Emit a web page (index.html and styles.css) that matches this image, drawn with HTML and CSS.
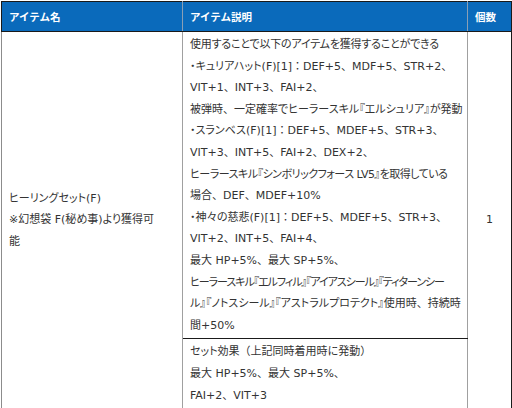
FILE: index.html
```html
<!DOCTYPE html>
<html lang="ja">
<head>
<meta charset="utf-8">
<link rel="stylesheet" href="styles.css">
</head>
<body>
<table class="items">
  <colgroup>
    <col class="c-name">
    <col class="c-desc">
    <col class="c-qty">
  </colgroup>
  <thead>
    <tr>
      <th class="col-name">アイテム名</th>
      <th class="col-desc">アイテム説明</th>
      <th class="col-qty">個数</th>
    </tr>
  </thead>
  <tbody>
    <tr>
      <td class="name" rowspan="2">
        <span class="ln">ヒーリングセット(F)</span>
        <span class="ln">※幻想袋 F(秘め事)より獲得可</span>
        <span class="ln">能</span>
      </td>
      <td class="desc">
        <span class="ln snug">使用することで以下のアイテムを獲得することができる</span>
        <span class="ln">・キュリアハット(F)[1]<span class="fw">：</span>DEF+5<span class="fw">、</span>MDF+5<span class="fw">、</span>STR+2<span class="fw">、</span></span>
        <span class="ln">VIT+1<span class="fw">、</span>INT+3<span class="fw">、</span>FAI+2<span class="fw">、</span></span>
        <span class="ln">被弾時<span class="fw">、</span>一定確率でヒーラースキル『エルシュリア』が発動</span>
        <span class="ln">・スランベス(F)[1]<span class="fw">：</span>DEF+5<span class="fw">、</span>MDEF+5<span class="fw">、</span>STR+3<span class="fw">、</span></span>
        <span class="ln">VIT+3<span class="fw">、</span>INT+5<span class="fw">、</span>FAI+2<span class="fw">、</span>DEX+2<span class="fw">、</span></span>
        <span class="ln tight">ヒーラースキル『シンボリックフォース LV5』を取得している</span>
        <span class="ln">場合<span class="fw">、</span>DEF<span class="fw">、</span>MDEF+10%</span>
        <span class="ln">・神々の慈悲(F)[1]<span class="fw">：</span>DEF+5<span class="fw">、</span>MDEF+5<span class="fw">、</span>STR+3<span class="fw">、</span></span>
        <span class="ln">VIT+2<span class="fw">、</span>INT+5<span class="fw">、</span>FAI+4<span class="fw">、</span></span>
        <span class="ln">最大 HP+5%<span class="fw">、</span>最大 SP+5%<span class="fw">、</span></span>
        <span class="ln tighter">ヒーラースキル『エルフィル』『アイアスシール』『ティターンシー</span>
        <span class="ln">ル』『ノトスシール』『アストラルプロテクト』使用時<span class="fw">、</span>持続時</span>
        <span class="ln">間+50%</span>
      </td>
      <td class="qty" rowspan="2">1</td>
    </tr>
    <tr>
      <td class="desc set">
        <span class="ln">セット効果<span class="fw">（</span>上記同時着用時に発動<span class="fw">）</span></span>
        <span class="ln">最大 HP+5%<span class="fw">、</span>最大 SP+5%<span class="fw">、</span></span>
        <span class="ln">FAI+2<span class="fw">、</span>VIT+3</span>
      </td>
    </tr>
  </tbody>
</table>
</body>
</html>
```

FILE: styles.css
```css
html, body {
  margin: 0;
  padding: 0;
  background: #ffffff;
}
body {
  padding: 1px 0 0 1px;
  font-family: "DejaVu Sans", "Noto Sans CJK JP", sans-serif;
  font-size: 11px;
  font-feature-settings: "palt";
  color: #333333;
}
.items {
  border-collapse: collapse;
  width: 510px;
  table-layout: fixed;
}
.c-name { width: 181px; }
.c-desc { width: 285px; }
.c-qty { width: 44px; }
.items th {
  background: #0a6abb;
  color: #ffffff;
  font-family: "Noto Sans CJK JP", sans-serif;
  font-feature-settings: normal;
  font-size: 10.5px;
  font-weight: bold;
  text-align: left;
  height: 29px;
  padding: 0 7px;
  border-top: 1px solid #1a1a1a;
  border-bottom: 1px solid #1a1a1a;
  border-left: 1px solid #8a9fb5;
  border-right: 1px solid #8a9fb5;
  line-height: 14px;
}
.items th.col-name { border-left-color: #1a1a1a; }
.items th.col-qty { border-right-color: #1a1a1a; }
.items td {
  border-left: 1px solid #a0a0a0;
  border-right: 1px solid #a0a0a0;
  border-bottom: 1px solid #1a1a1a;
  padding: 2px 7px;
  line-height: 21.6px;
  vertical-align: top;
}
.items td.name {
  vertical-align: middle;
  border-left-color: #8c8c8c;
}
.items td.qty {
  vertical-align: middle;
  text-align: center;
  border-right-color: #1a1a1a;
}
.ln {
  display: block;
  white-space: nowrap;
}
.snug { letter-spacing: -0.2px; }
.tight { letter-spacing: -0.5px; }
.tighter { letter-spacing: -1.05px; }
.fw {
  font-feature-settings: normal;
}
```
